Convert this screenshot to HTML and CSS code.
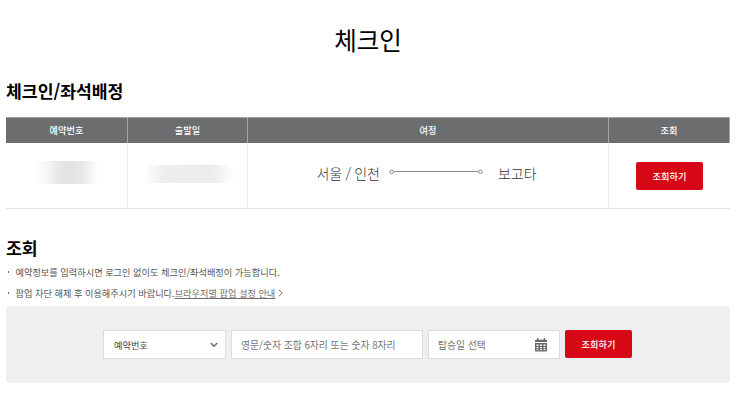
FILE: index.html
```html
<!DOCTYPE html>
<html lang="ko">
<head>
    <meta charset="UTF-8">
    <meta name="viewport" content="width=device-width, initial-scale=1.0">
    <title>체크인</title>
    <link rel="stylesheet" href="styles.css">
</head>
<body>
    <h1>체크인</h1>

    <h2>체크인/좌석배정</h2>
    <table class="booking-table">
        <colgroup>
            <col class="col-number">
            <col class="col-date">
            <col class="col-route">
            <col class="col-action">
        </colgroup>
        <thead>
            <tr>
                <th>예약번호</th>
                <th>출발일</th>
                <th>여정</th>
                <th>조회</th>
            </tr>
        </thead>
        <tbody>
            <tr>
                <td><div class="masked masked-number"></div></td>
                <td><div class="masked masked-date"></div></td>
                <td>
                    <div class="route">
                        <span>서울 / 인천</span>
                        <svg class="route-line" width="94" height="6" viewBox="0 0 94 6" fill="none" stroke="#8c8c8c">
                            <path d="M4.500 2.500h85"/>
                            <circle cx="2.700" cy="2.800" r="1.800"/>
                            <circle cx="91.500" cy="2.800" r="1.800"/>
                        </svg>
                        <span>보고타</span>
                    </div>
                </td>
                <td><button type="button" class="btn">조회하기</button></td>
            </tr>
        </tbody>
    </table>

    <h2 class="search-title">조회</h2>
    <ul class="notice">
        <li>예약정보를 입력하시면 로그인 없이도 체크인/좌석배정이 가능합니다.</li>
        <li>팝업 차단 해제 후 이용해주시기 바랍니다.<a href="#">브라우저별 팝업 설정 안내</a><svg class="arrow" width="5" height="8" viewBox="0 0 5 8" fill="none" stroke="#777"><path d="M.7 .7L4.2 4L.7 7.3"/></svg></li>
    </ul>

    <form class="search-form">
        <div class="field field-type">
            <span>예약번호</span>
            <svg width="8" height="6" viewBox="0 0 8 6" fill="none" stroke="#666" stroke-width="1.4"><path d="M.8 1L4 4.2L7.2 1"/></svg>
        </div>
        <input type="text" class="field field-number" placeholder="영문/숫자 조합 6자리 또는 숫자 8자리">
        <div class="field field-date">
            <span>탑승일 선택</span>
            <svg width="12" height="14" viewBox="0 0 12 14" fill="#63666a">
                <path fill-rule="evenodd" d="M2 0h1.4v1.7h5.2V0H10v1.7h1q1 0 1 1V4H0V2.700q0-1 1-1h1zM0 5h12v7.500q0 1-1 1H1q-1 0-1-1zM1.500 6.400v1.500h2V6.400zM5 6.400v1.500h2V6.400zM8.500 6.400v1.500h2V6.400zM1.500 9v1.300h2V9zM5 9v1.300h2V9zM8.500 9v1.300h2V9zM1.500 11.300v1h2v-1zM5 11.300v1h2v-1zM8.500 11.300v1h2v-1z"/>
            </svg>
        </div>
        <button type="button" class="btn">조회하기</button>
    </form>
</body>
</html>
```

FILE: styles.css
```css
* {
    box-sizing: border-box;
}
body {
    margin: 0;
    padding: 22px 13px 0 6px;
    background-color: #fff;
    color: #000;
    font-family: "Noto Sans CJK KR", sans-serif;
}
h1 {
    margin: 0;
    font-size: 24.5px;
    font-weight: 400;
    line-height: 36px;
    text-align: center;
}
h2 {
    margin: 20px 0 0;
    font-size: 17.2px;
    font-weight: 700;
    line-height: 26px;
}
.booking-table {
    width: 724px;
    margin-top: 13px;
    border-collapse: separate;
    border-spacing: 0;
    table-layout: fixed;
}
.col-number {
    width: 122px;
}
.col-date {
    width: 120px;
}
.col-route {
    width: 361px;
}
.col-action {
    width: 121px;
}
th {
    height: 26px;
    padding: 0 0 1px;
    border-top: 1px solid #a0a1a3;
    border-right: 1px solid #a5a6a8;
    background-color: #6c6d6f;
    color: #fff;
    font-size: 9.2px;
    font-weight: 500;
    line-height: 14px;
}
td {
    height: 66px;
    padding: 0;
    border-right: 1px solid #e8e8e8;
    border-bottom: 1px solid #e5e5e5;
    text-align: center;
    vertical-align: middle;
}
td:last-child {
    border-right: 0;
}
.masked {
    margin: 0 auto;
}
.masked-number {
    width: 62px;
    height: 23px;
    margin-top: -6px;
    background: linear-gradient(to right, #fff, #f4f4f4 20%, #e6e6e6 40%, #e2e2e2 55%, #e9e9e9 75%, #fff);
}
.masked-date {
    width: 86px;
    height: 18px;
    margin: -4px 0 0 20px;
    background: linear-gradient(to right, #fbfbfb, #eee 18%, #ececec 75%, #fff);
}
.route {
    display: flex;
    align-items: center;
    justify-content: center;
    margin: -6px 3px 0 0;
    color: #333;
    font-size: 14px;
    font-weight: 300;
    line-height: 20px;
    word-spacing: -0.7px;
}
.route-line {
    margin: 0 15px 1px 9px;
}
.btn {
    width: 67px;
    height: 28px;
    padding: 0;
    border: 0;
    border-radius: 2px;
    background-color: #d60815;
    color: #fff;
    font-family: inherit;
    font-size: 9.2px;
    font-weight: 500;
    line-height: 28px;
    vertical-align: middle;
}
.search-title {
    margin-top: 26px;
}
.notice {
    margin: 1px 0 0;
    padding: 0;
    list-style: none;
    color: #555;
    font-size: 9.2px;
    line-height: 20.5px;
}
.notice li {
    display: flex;
    align-items: center;
}
.notice li::before {
    content: "";
    width: 1px;
    height: 2px;
    margin: 0 6.5px 0 2px;
    background-color: #666;
}
.notice a {
    color: #776b65;
    text-underline-offset: 1px;
}
.arrow {
    margin-left: 3px;
}
.search-form {
    display: flex;
    align-items: center;
    width: 724px;
    height: 77px;
    margin-top: 3px;
    padding-left: 97px;
    border-radius: 4px;
    background-color: #efefef;
}
.search-form .btn {
    margin-bottom: 1px;
}
.field {
    display: flex;
    align-items: center;
    justify-content: space-between;
    height: 29px;
    padding: 0 9px;
    border: 1px solid #dcdcdc;
    background-color: #fff;
    color: #757575;
    font-family: inherit;
    font-size: 9.8px;
    line-height: 14px;
}
.field::placeholder {
    color: #757575;
}
.field-type {
    width: 123px;
    margin-right: 5px;
    padding: 0 7px 0 10px;
    color: #444;
    font-size: 9.2px;
}
.field-number {
    width: 192px;
    margin-right: 5px;
}
.field-date {
    width: 132px;
    margin-right: 5px;
    padding-right: 12px;
}
```
